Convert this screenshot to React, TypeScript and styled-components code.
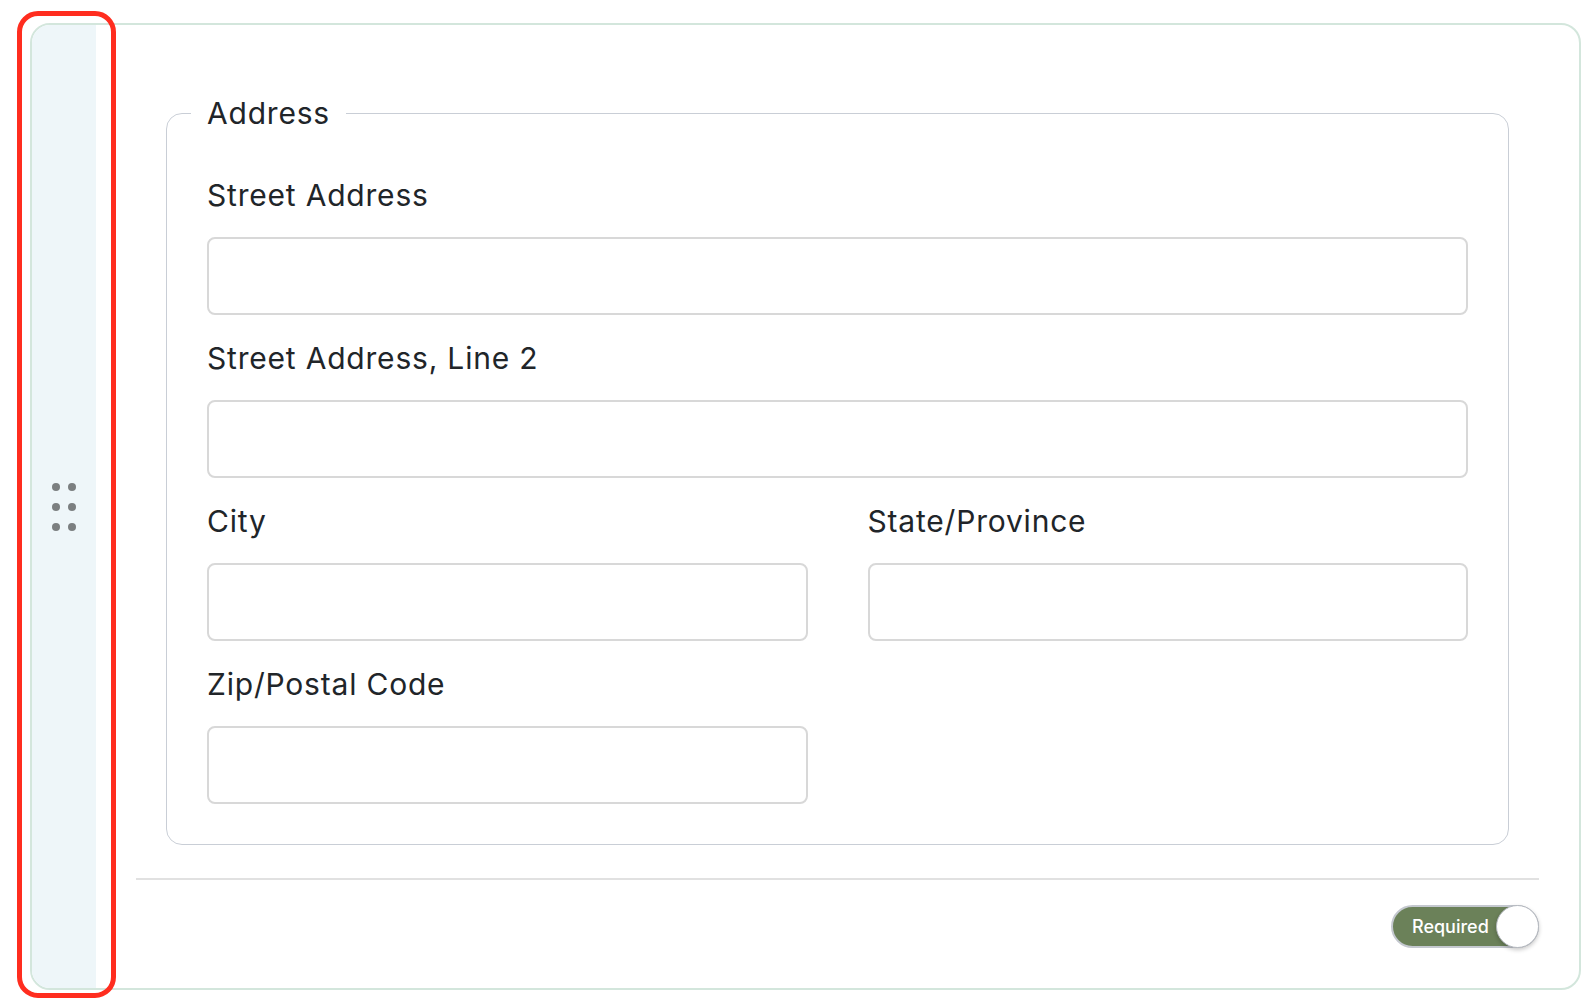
import React from "react";
import styled, { createGlobalStyle } from "styled-components";

const Global = createGlobalStyle`
  html, body { margin: 0; padding: 0; background: #ffffff; }
  body { font-family: Inter, "Noto Sans", "Liberation Sans", sans-serif; color: #212529; }
  * { box-sizing: border-box; }
`;

const Page = styled.div`
  min-height: 1004px;
  padding: 23px 15px 0 30px;
`;

const Frame = styled.div`
  position: relative;
  width: 1551px;
`;

const Card = styled.div`
  display: flex;
  border: 2px solid #d3e6dc;
  border-radius: 20px;
  overflow: hidden;
  background: #ffffff;
`;

const Handle = styled.div`
  width: 64px;
  flex: none;
  background: #eef6f9;
  display: flex;
  align-items: center;
  justify-content: center;
`;

const Highlight = styled.div`
  position: absolute;
  left: -13px;
  top: -12px;
  width: 99px;
  height: 987px;
  border: 5px solid #ff2d1f;
  border-radius: 21px;
  pointer-events: none;
`;

const Main = styled.div`
  flex: 1;
  padding: 40px 40px 40px;
  min-width: 0;
`;

const Group = styled.fieldset`
  margin: 30px 30px 33px;
  padding: 46px 40px 40px;
  border: 1px solid #c9ced6;
  border-radius: 16px;
  min-width: 0;
`;

const Legend = styled.legend`
  font-size: 30px;
  line-height: 36px;
  letter-spacing: 0.8px;
  padding: 0 16px;
  margin-left: -16px;
  color: #212529;
`;

const FieldGrid = styled.div`
  display: grid;
  grid-template-columns: 1fr 1fr;
  column-gap: 60px;
  row-gap: 25px;
`;

const Field = styled.div<{ $full?: boolean }>`
  display: flex;
  flex-direction: column;
  gap: 24px;
  grid-column: ${(p) => (p.$full ? "1 / -1" : "auto")};
`;

const Label = styled.label`
  font-size: 30px;
  line-height: 36px;
  letter-spacing: 0.8px;
  color: #212529;
`;

const Input = styled.input`
  height: 78px;
  width: 100%;
  border: 2px solid #d8d8d8;
  border-radius: 8px;
  background: #ffffff;
  font: inherit;
  font-size: 24px;
  padding: 0 16px;
  outline: none;
`;

const Footer = styled.div`
  border-top: 2px solid #e1e1e1;
  padding-top: 25px;
  display: flex;
  justify-content: flex-end;
`;

const Toggle = styled.div`
  position: relative;
  width: 148px;
  height: 43px;
  border: 2px solid #c4c8cf;
  border-radius: 22px;
  background: #6b8159;
  display: flex;
  align-items: center;
  padding-left: 19px;
  color: #ffffff;
  font-size: 18px;
  font-weight: 500;
`;

const Knob = styled.span`
  position: absolute;
  right: -2px;
  top: -2px;
  width: 43px;
  height: 43px;
  border-radius: 50%;
  background: #ffffff;
  border: 1px solid #b4b8bf;
  box-shadow: 0 2px 4px rgba(0, 0, 0, 0.22);
`;

const Grip = () => (
  <svg width="24" height="48" viewBox="0 0 24 48" aria-hidden="true">
    {[4, 24, 44].map((y) =>
      [4, 20].map((x) => <circle key={`${x}-${y}`} cx={x} cy={y} r="4" fill="#7b7f80" />)
    )}
  </svg>
);

export default function App() {
  return (
    <>
      <Global />
      <Page>
        <Frame>
          <Card>
            <Handle>
              <Grip />
            </Handle>
            <Main>
              <Group>
                <Legend>Address</Legend>
                <FieldGrid>
                  <Field $full>
                    <Label>Street Address</Label>
                    <Input type="text" />
                  </Field>
                  <Field $full>
                    <Label>Street Address, Line 2</Label>
                    <Input type="text" />
                  </Field>
                  <Field>
                    <Label>City</Label>
                    <Input type="text" />
                  </Field>
                  <Field>
                    <Label>State/Province</Label>
                    <Input type="text" />
                  </Field>
                  <Field>
                    <Label>Zip/Postal Code</Label>
                    <Input type="text" />
                  </Field>
                </FieldGrid>
              </Group>
              <Footer>
                <Toggle>
                  Required
                  <Knob />
                </Toggle>
              </Footer>
            </Main>
          </Card>
          <Highlight />
        </Frame>
      </Page>
    </>
  );
}
